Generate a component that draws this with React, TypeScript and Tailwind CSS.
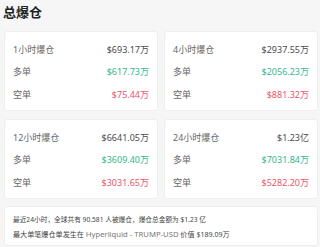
import React from "react";

type Row = { label: string; value: string; tone: "n" | "g" | "r" };
const cards: Row[][] = [
  [
    { label: "1小时爆仓", value: "$693.17万", tone: "n" },
    { label: "多单", value: "$617.73万", tone: "g" },
    { label: "空单", value: "$75.44万", tone: "r" },
  ],
  [
    { label: "4小时爆仓", value: "$2937.55万", tone: "n" },
    { label: "多单", value: "$2056.23万", tone: "g" },
    { label: "空单", value: "$881.32万", tone: "r" },
  ],
  [
    { label: "12小时爆仓", value: "$6641.05万", tone: "n" },
    { label: "多单", value: "$3609.40万", tone: "g" },
    { label: "空单", value: "$3031.65万", tone: "r" },
  ],
  [
    { label: "24小时爆仓", value: "$1.23亿", tone: "n" },
    { label: "多单", value: "$7031.84万", tone: "g" },
    { label: "空单", value: "$5282.20万", tone: "r" },
  ],
];

const toneCls = {
  n: "text-[#4a4a4a]",
  g: "text-[#35b68c]",
  r: "text-[#ec5468]",
};

export default function App() {
  return (
    <div
      className="w-[320px] h-[247px] bg-[#f6f6f7] pl-1 pr-[2px] overflow-hidden"
      style={{ fontFamily: '"Noto Sans", "Noto Sans CJK SC", sans-serif' }}
    >
      <div className="h-[31px] pt-[3px] text-[13px] font-bold text-[#222] leading-[18px] -ml-[1px]">
        总爆仓
      </div>
      <div className="grid grid-cols-2 gap-x-[6px] gap-y-[8px]">
        {cards.map((rows, i) => (
          <div
            key={i}
            className="h-[80px] bg-white rounded-[3px] border border-[#eeeeee] px-2 pt-[6px] pb-[4px] flex flex-col"
          >
            {rows.map((r, j) => (
              <div key={j} className="h-[23px] flex items-center justify-between text-[9px]">
                <span className="text-[#666]">{r.label}</span>
                <span className={toneCls[r.tone]}>{r.value}</span>
              </div>
            ))}
          </div>
        ))}
      </div>
      <div className="mt-[7px] h-[40px] bg-white rounded-[3px] border border-[#eeeeee] pl-[8px] pt-[6px] leading-[14px] text-[#444]">
        <div className="text-[6.7px]">最近24小时，全球共有 90.581 人被爆仓，爆仓总金额为 $1.23 亿</div>
        <div className="text-[7.1px]">
          最大单笔爆仓单发生在 <span className="text-[7.7px] text-[#777]">Hyperliquid - TRUMP-USD</span> 价值 $189.09万
        </div>
      </div>
    </div>
  );
}
